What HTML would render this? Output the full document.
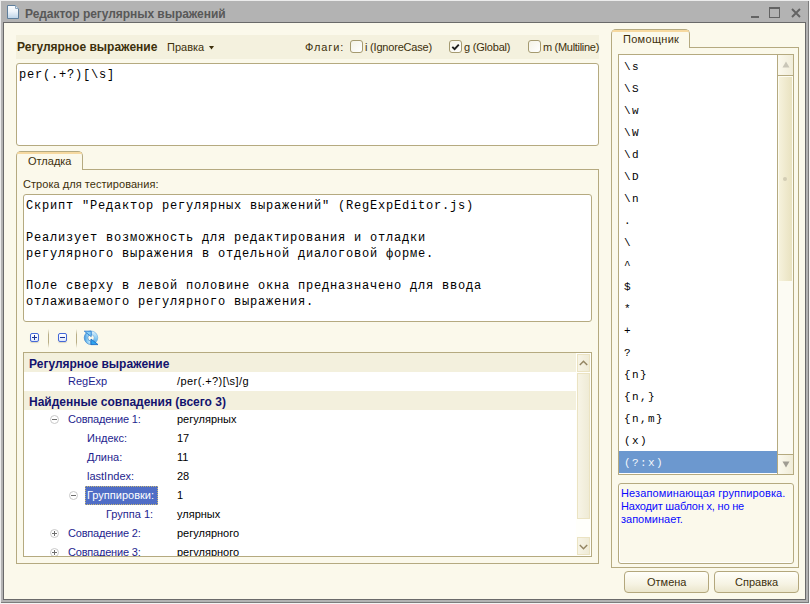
<!DOCTYPE html>
<html><head><meta charset="utf-8">
<style>
*{box-sizing:border-box;margin:0;padding:0}
html,body{width:810px;height:604px;overflow:hidden;background:#b3b3b3}
body{position:relative;font-family:"Liberation Sans",sans-serif;font-size:11px;line-height:13px;color:#3d300c}
.a{position:absolute;white-space:pre}
.m{font-family:"Liberation Mono",monospace;font-size:12px;letter-spacing:0.8px;color:#000}
.bx{position:absolute;background:#fff;border:1px solid #b5aa80;border-radius:3px}
.cb{position:absolute;width:13px;height:13px;border:1px solid #a59a70;border-radius:3px;background:linear-gradient(135deg,#f4f2e6,#fff)}
.ln{position:absolute;background:#b5aa80}
.nv{color:#1e1e8e}
.bk{color:#000}
.hb{font-weight:bold;font-size:12px;color:#13136e}
.gr{position:absolute;width:9px;height:9px;border:1px solid #c9c9c9;border-radius:50%;background:#fff}
.gr:before{content:"";position:absolute;left:1px;top:3px;width:5px;height:1px;background:#6e6e6e}
.gr.p:after{content:"";position:absolute;left:3px;top:1px;width:1px;height:5px;background:#6e6e6e}
.btn{position:absolute;border:1px solid #b3a77c;border-radius:4px;background:linear-gradient(#fffffa,#f6f3e3 60%,#ebe6cc)}
</style></head><body>
<!-- window frame -->
<div class="a" style="left:0;top:0;width:810px;height:1px;background:#ececec"></div>
<div class="a" style="left:0;top:0;width:1px;height:604px;background:#ececec"></div>
<div class="a" style="left:808px;top:1px;width:1px;height:602px;background:#7c7c7c"></div>
<div class="a" style="left:809px;top:0;width:1px;height:604px;background:#f4f4f4"></div>
<div class="a" style="left:1px;top:602px;width:808px;height:1px;background:#7c7c7c"></div>
<div class="a" style="left:0;top:603px;width:810px;height:1px;background:#f4f4f4"></div>
<!-- title -->
<svg class="a" style="left:7px;top:5px" width="12" height="14" viewBox="0 0 12 14">
<defs><linearGradient id="pg" x1="0" y1="0" x2="0" y2="1"><stop offset="0" stop-color="#fbfdff"/><stop offset="0.45" stop-color="#eef4fa"/><stop offset="1" stop-color="#bcd3e8"/></linearGradient></defs>
<path d="M0.5 0.5H8.5L11.5 3.5V13.5H0.5Z" fill="url(#pg)" stroke="#5f7f9c"/><path d="M8.5 0.5V3.5H11.5" fill="#dde8f2" stroke="#8ea6bc"/>
</svg>
<div class="a" style="left:25px;top:8px;font-weight:bold;font-size:12px;color:#585858;letter-spacing:-0.05px">Редактор регулярных выражений</div>
<div class="a" style="left:751px;top:16px;width:8px;height:2px;background:#636363"></div>
<div class="a" style="left:769px;top:7px;width:11px;height:11px;border:1px solid #636363;border-top-width:2px"></div>
<svg class="a" style="left:791px;top:8px" width="10" height="10" viewBox="0 0 10 10"><path d="M1 1L9 9M9 1L1 9" stroke="#636363" stroke-width="1.9"/></svg>

<!-- client area -->
<div class="a" style="left:3px;top:22px;width:803px;height:578px;border:1px solid #6a6a6a;background:#fbf9eb"></div>

<!-- header band -->
<div class="a" style="left:16px;top:35px;width:583px;height:24px;background:#f4f1de"></div>
<div class="a" style="left:17px;top:41px;font-weight:bold;font-size:12px;color:#3d300c">Регулярное выражение</div>
<div class="a" style="left:167px;top:41px">Правка</div>
<svg class="a" style="left:209px;top:46px" width="5" height="4"><path d="M0 0H5L2.5 3.5Z" fill="#3d300c"/></svg>
<div class="a" style="left:305px;top:41px;letter-spacing:0.9px">Флаги:</div>
<div class="cb" style="left:350px;top:40px"></div>
<div class="a" style="left:365px;top:41px;letter-spacing:-0.2px">i (IgnoreCase)</div>
<div class="cb" style="left:449px;top:40px"></div>
<svg class="a" style="left:451px;top:42px" width="9" height="9"><path d="M1.3 4.9L3.6 7.2L7.8 2.6" fill="none" stroke="#1e1e1e" stroke-width="1.9"/></svg>
<div class="a" style="left:464px;top:41px;letter-spacing:-0.2px">g (Global)</div>
<div class="cb" style="left:528px;top:40px"></div>
<div class="a" style="left:543px;top:41px;letter-spacing:-0.3px">m (Multiline)</div>

<!-- regex box -->
<div class="bx" style="left:16px;top:63px;width:583px;height:83px"></div>
<div class="a m" style="left:19px;top:67px;line-height:16px">per(.+?)[\s]</div>

<!-- debug tab panel -->
<div class="a" style="left:16px;top:169px;width:583px;height:395px;border:1px solid #b5aa80"></div>
<div class="a" style="left:16px;top:151px;width:67px;height:19px;border:1px solid #b5aa80;border-bottom:none;border-radius:5px 5px 0 0;background:#fbf9eb"></div>
<div class="a" style="left:17px;top:152px;width:65px;height:2px;border-radius:4px 4px 0 0;background:#f6d9a0"></div>
<div class="a" style="left:28px;top:155px">Отладка</div>
<div class="a" style="left:23px;top:178px;letter-spacing:0.05px">Строка для тестирования:</div>
<div class="bx" style="left:23px;top:194px;width:569px;height:128px"></div>
<div class="a m" style="left:26px;top:198px;line-height:16px">Скрипт "Редактор регулярных выражений" (RegExpEditor.js)

Реализует возможность для редактирования и отладки
регулярного выражения в отдельной диалоговой форме.

Поле сверху в левой половине окна предназначено для ввода
отлаживаемого регулярного выражения.</div>

<!-- toolbar -->
<div class="a" style="left:30px;top:333px;width:9px;height:9px;border:1px solid #4468d8;border-radius:2px;background:linear-gradient(#fff,#dfe8fb);box-shadow:0 1px 1px rgba(120,110,70,.25)"></div>
<div class="a" style="left:32px;top:337px;width:5px;height:1px;background:#1c3596"></div>
<div class="a" style="left:34px;top:335px;width:1px;height:5px;background:#1c3596"></div>
<div class="a" style="left:48px;top:329px;width:1px;height:19px;background:linear-gradient(#fbf9eb,#b9ae86 30%,#b9ae86 70%,#fbf9eb)"></div>
<div class="a" style="left:58px;top:333px;width:9px;height:9px;border:1px solid #4468d8;border-radius:2px;background:linear-gradient(#fff,#dfe8fb);box-shadow:0 1px 1px rgba(120,110,70,.25)"></div>
<div class="a" style="left:60px;top:337px;width:5px;height:1px;background:#1c3596"></div>
<div class="a" style="left:76px;top:329px;width:1px;height:19px;background:linear-gradient(#fbf9eb,#b9ae86 30%,#b9ae86 70%,#fbf9eb)"></div>
<svg class="a" style="left:83px;top:330px" width="16" height="16" viewBox="0 0 16 16">
<defs><linearGradient id="rl" x1="0" y1="0" x2="1" y2="0"><stop offset="0" stop-color="#3f95dc"/><stop offset="0.5" stop-color="#8fd0f6"/><stop offset="1" stop-color="#d4eefc"/></linearGradient>
<linearGradient id="rr" x1="0" y1="0" x2="0" y2="1"><stop offset="0" stop-color="#e2f3fd"/><stop offset="0.5" stop-color="#8fcdf3"/><stop offset="1" stop-color="#3a9be3"/></linearGradient></defs>
<path d="M8 1A6.75 6.75 0 0 0 8 14.5V11A3.2 3.2 0 0 1 8 4.6Z" fill="url(#rl)" stroke="#3a84cf" stroke-width="0.7"/>
<path d="M8 1A6.75 6.75 0 0 1 8 14.5V11A3.2 3.2 0 0 0 8 4.6Z" fill="url(#rr)" stroke="#5aa6e0" stroke-width="0.6"/>
<path d="M1.3 1.2H8.2V6.6Z" fill="#86cdf6" stroke="#2f7fd0" stroke-width="0.9"/>
<path d="M8 9V14.6H15Z" fill="#2ea4ef" stroke="#1f6fc4" stroke-width="0.9"/>
</svg>

<!-- grid -->
<div class="a" style="left:23px;top:352px;width:569px;height:205px;border:1px solid #b5aa80;background:#fff;overflow:hidden">
 <div class="a" style="left:0;top:0;width:552px;height:19px;background:#f3f0dd"></div>
 <div class="a" style="left:0;top:38px;width:552px;height:19px;background:#f3f0dd"></div>
 <div class="a hb" style="left:5px;top:5px">Регулярное выражение</div>
 <div class="a nv" style="left:44px;top:22px">RegExp</div>
 <div class="a bk" style="left:153px;top:22px;letter-spacing:0.42px">/per(.+?)[\s]/g</div>
 <div class="a hb" style="left:5px;top:43px">Найденные совпадения (всего 3)</div>
 <div class="gr" style="left:26px;top:62px"></div>
 <div class="a nv" style="left:44px;top:60px;letter-spacing:-0.2px">Совпадение 1:</div>
 <div class="a bk" style="left:153px;top:60px">регулярных</div>
 <div class="a nv" style="left:63px;top:79px">Индекс:</div>
 <div class="a bk" style="left:153px;top:79px">17</div>
 <div class="a nv" style="left:63px;top:98px">Длина:</div>
 <div class="a bk" style="left:153px;top:98px">11</div>
 <div class="a nv" style="left:63px;top:117px">lastIndex:</div>
 <div class="a bk" style="left:153px;top:117px">28</div>
 <div class="gr" style="left:45px;top:138px"></div>
 <div class="a" style="left:61px;top:133px;width:73px;height:19px;background:#506ec6;border:1px dotted #c8b878"></div>
 <div class="a" style="left:63px;top:136px;color:#fff">Группировки:</div>
 <div class="a bk" style="left:153px;top:136px">1</div>
 <div class="a nv" style="left:82px;top:155px">Группа 1:</div>
 <div class="a bk" style="left:153px;top:155px">улярных</div>
 <div class="gr p" style="left:26px;top:176px"></div>
 <div class="a nv" style="left:44px;top:174px;letter-spacing:-0.2px">Совпадение 2:</div>
 <div class="a bk" style="left:153px;top:174px">регулярного</div>
 <div class="gr p" style="left:26px;top:195px"></div>
 <div class="a nv" style="left:44px;top:193px;letter-spacing:-0.2px">Совпадение 3:</div>
 <div class="a bk" style="left:153px;top:193px">регулярного</div>
 <!-- scrollbar -->
 <div class="a" style="left:552px;top:0;width:15px;height:203px;background:#fffffb"></div>
 <div class="a" style="left:553px;top:1px;width:13px;height:18px;border:1px solid #ebe3c2;background:linear-gradient(90deg,#f7f4e6,#efebd6)"></div>
 <svg class="a" style="left:555px;top:7px" width="9" height="6"><path d="M0.8 5L4.5 1.3L8.2 5" fill="none" stroke="#948663" stroke-width="1.5"/></svg>
 <div class="a" style="left:553px;top:20px;width:13px;height:146px;border:1px solid #ebe3c2;background:linear-gradient(90deg,#f7f4e6,#efebd6)"></div>
 <div class="a" style="left:553px;top:184px;width:13px;height:18px;border:1px solid #ebe3c2;background:linear-gradient(90deg,#f7f4e6,#efebd6)"></div>
 <svg class="a" style="left:555px;top:191px" width="9" height="6"><path d="M0.8 1L4.5 4.7L8.2 1" fill="none" stroke="#948663" stroke-width="1.5"/></svg>
</div>

<!-- right tab panel -->
<div class="a" style="left:611px;top:47px;width:188px;height:521px;border:1px solid #b5aa80"></div>
<div class="a" style="left:611px;top:29px;width:79px;height:19px;border:1px solid #b5aa80;border-bottom:none;border-radius:5px 5px 0 0;background:#fbf9eb"></div>
<div class="a" style="left:612px;top:30px;width:77px;height:2px;border-radius:4px 4px 0 0;background:#f6d9a0"></div>
<div class="a" style="left:623px;top:33px;letter-spacing:0.3px">Помощник</div>
<div class="a" style="left:618px;top:54px;width:176px;height:421px;border:1px solid #b5aa80;background:#fff;overflow:hidden">
 <div class="a" style="left:0;top:396px;width:158px;height:22px;background:#6c98cf"></div>
 <div class="a m" style="left:5px;top:1px;line-height:22px;font-size:11px;letter-spacing:1.4px">\s
\S
\w
\W
\d
\D
\n
.
\
^
$
*
+
?
{n}
{n,}
{n,m}
(x)
<span style="color:#f4f7fc">(?:x)</span></div>
 <!-- scrollbar -->
 <div class="a" style="left:158px;top:0;width:16px;height:419px;background:#fcfbf3;border-left:1px solid #b5aa80"></div>
 <div class="a" style="left:159px;top:0;width:15px;height:21px;border-bottom:1px solid #b5aa80;background:linear-gradient(90deg,#fbf9ee,#f0ecd8)"></div>
 <svg class="a" style="left:163px;top:6px" width="8" height="7"><path d="M0.5 6.5L4 0.5L7.5 6.5Z" fill="#c9c6b8"/></svg>
 <div class="a" style="left:159px;top:21px;width:15px;height:206px;border:1px solid #fdfcf2;background:linear-gradient(90deg,#f6f2dc,#e9e2c0)"></div>
 <div class="a" style="left:164px;top:122px;width:4px;height:4px;border-radius:50%;background:#d3cdb4"></div>
 <div class="a" style="left:159px;top:399px;width:15px;height:20px;border-top:1px solid #b5aa80;background:linear-gradient(90deg,#fbf9ee,#f0ecd8)"></div>
 <svg class="a" style="left:163px;top:406px" width="8" height="7"><path d="M0.5 0.5L4 6.5L7.5 0.5Z" fill="#9f9c92"/></svg>
</div>
<div class="a" style="left:618px;top:483px;width:176px;height:81px;border:1px solid #b5aa80;border-radius:3px;background:#fbf9eb;box-shadow:inset 1px -1px 0 #fff"></div>
<div class="a" style="left:621px;top:487px;color:#0a0aff;line-height:13px"><span style="letter-spacing:0.12px">Незапоминающая группировка.</span>
<span style="letter-spacing:-0.2px">Находит шаблон x, но не</span>
запоминает.</div>

<!-- buttons -->
<div class="btn" style="left:624px;top:571px;width:85px;height:22px"></div>
<div class="a" style="left:647px;top:576px">Отмена</div>
<div class="btn" style="left:714px;top:571px;width:85px;height:22px"></div>
<div class="a" style="left:735px;top:576px">Справка</div>
</body></html>
